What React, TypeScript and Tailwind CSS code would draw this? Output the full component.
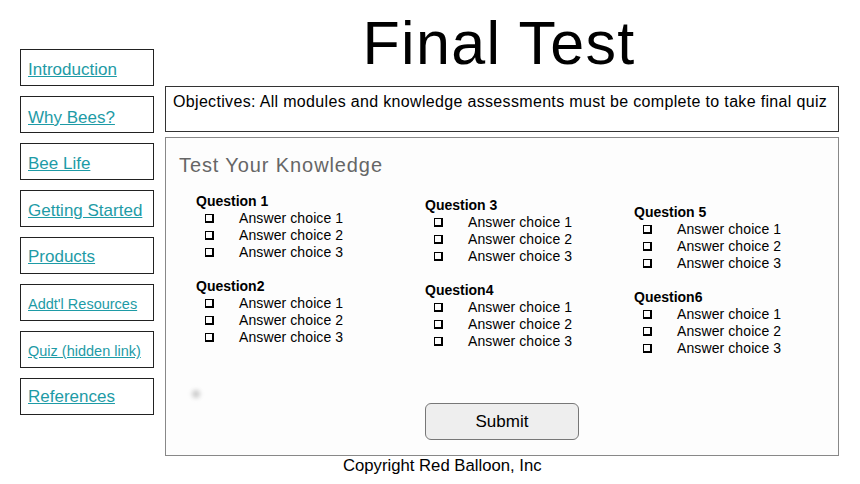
const navLinks = [
  { label: 'Introduction', size: 'text-[17px]', pad: 'pt-[8px]' },
  { label: 'Why Bees?', size: 'text-[17px]', pad: 'pt-[9px]' },
  { label: 'Bee Life', size: 'text-[17px]', pad: 'pt-[8px]' },
  { label: 'Getting Started', size: 'text-[17px]', pad: 'pt-[8px]' },
  { label: 'Products', size: 'text-[17px]', pad: 'pt-[7px]' },
  { label: "Addt'l Resources", size: 'text-[14.5px]', pad: 'pt-[7px]' },
  { label: 'Quiz (hidden link)', size: 'text-[14.5px]', pad: 'pt-[7px]' },
  { label: 'References', size: 'text-[17px]', pad: 'pt-[6px]' },
];

const columns = [
  { offset: 'mt-0', width: 'w-[229px]', questions: ['Question 1', 'Question2'] },
  { offset: 'mt-[4px]', width: 'w-[209px]', questions: ['Question 3', 'Question4'] },
  { offset: 'mt-[11px]', width: 'w-[200px]', questions: ['Question 5', 'Question6'] },
];

const answers = ['Answer choice 1', 'Answer choice 2', 'Answer choice 3'];

const Question = ({ title }: { title: string }) => (
  <div>
    <p className="font-bold text-[14px] leading-[17px] text-black">{title}</p>
    <ul>
      {answers.map((a) => (
        <li key={a} className="flex items-center h-[17px] text-[14px] leading-[17px] tracking-[0.1px] text-black">
          <span className="ml-[9px] w-[9px] h-[9px] border border-black border-r-2 border-b-2" />
          <span className="ml-[25px]">{a}</span>
        </li>
      ))}
    </ul>
  </div>
);

export default function App() {
  return (
    <div className="w-[860px] h-[484px] bg-white font-['Liberation_Sans',Arial,sans-serif] flex flex-col">
      <div className="flex">
        <nav className="flex flex-col gap-[10px] pl-[20px] pt-[49px] w-[154px]">
          {navLinks.map((l) => (
            <div key={l.label} className={`h-[37px] w-[134px] border border-[#222] px-[7px] ${l.pad}`}>
              <a href="#" className={`${l.size} leading-[20px] text-[#1e9ba6] underline`}>
                {l.label}
              </a>
            </div>
          ))}
        </nav>
        <main className="ml-[11px] w-[674px] flex flex-col">
          <h1 className="h-[86px] pt-[13px] pr-[6px] text-center text-[61px] leading-[61px] tracking-[1.3px] text-black">
            Final Test
          </h1>
          <div className="h-[46px] border border-[#333] px-[7px] pt-[6px] text-[16px] leading-[18px] tracking-[0.33px] text-black">
            Objectives: All modules and knowledge assessments must be complete to take final quiz
          </div>
          <section className="mt-[5px] h-[319px] border border-[#888] bg-[#fdfdfd] flex flex-col">
            <h2 className="pl-[13px] pt-[15px] text-[20px] leading-[24px] tracking-[0.9px] text-[#666]">
              Test Your Knowledge
            </h2>
            <div className="flex items-start pl-[30px] mt-[16px]">
              {columns.map((c, i) => (
                <div key={i} className={`${c.width} ${c.offset} flex flex-col gap-[17px]`}>
                  {c.questions.map((q) => (
                    <Question key={q} title={q} />
                  ))}
                </div>
              ))}
            </div>
            <div className="ml-[26px] mt-[33px] w-[8px] h-[8px] rounded-full bg-[#ccc] blur-[2px]" />
            <button className="ml-[259px] mt-[5px] w-[154px] h-[37px] rounded-[6px] border border-[#777] bg-[#eeeeee] text-[17px] text-black">
              Submit
            </button>
          </section>
        </main>
      </div>
      <p className="pl-[343px] text-[16.7px] leading-[20px] text-black">Copyright Red Balloon, Inc</p>
    </div>
  );
}
